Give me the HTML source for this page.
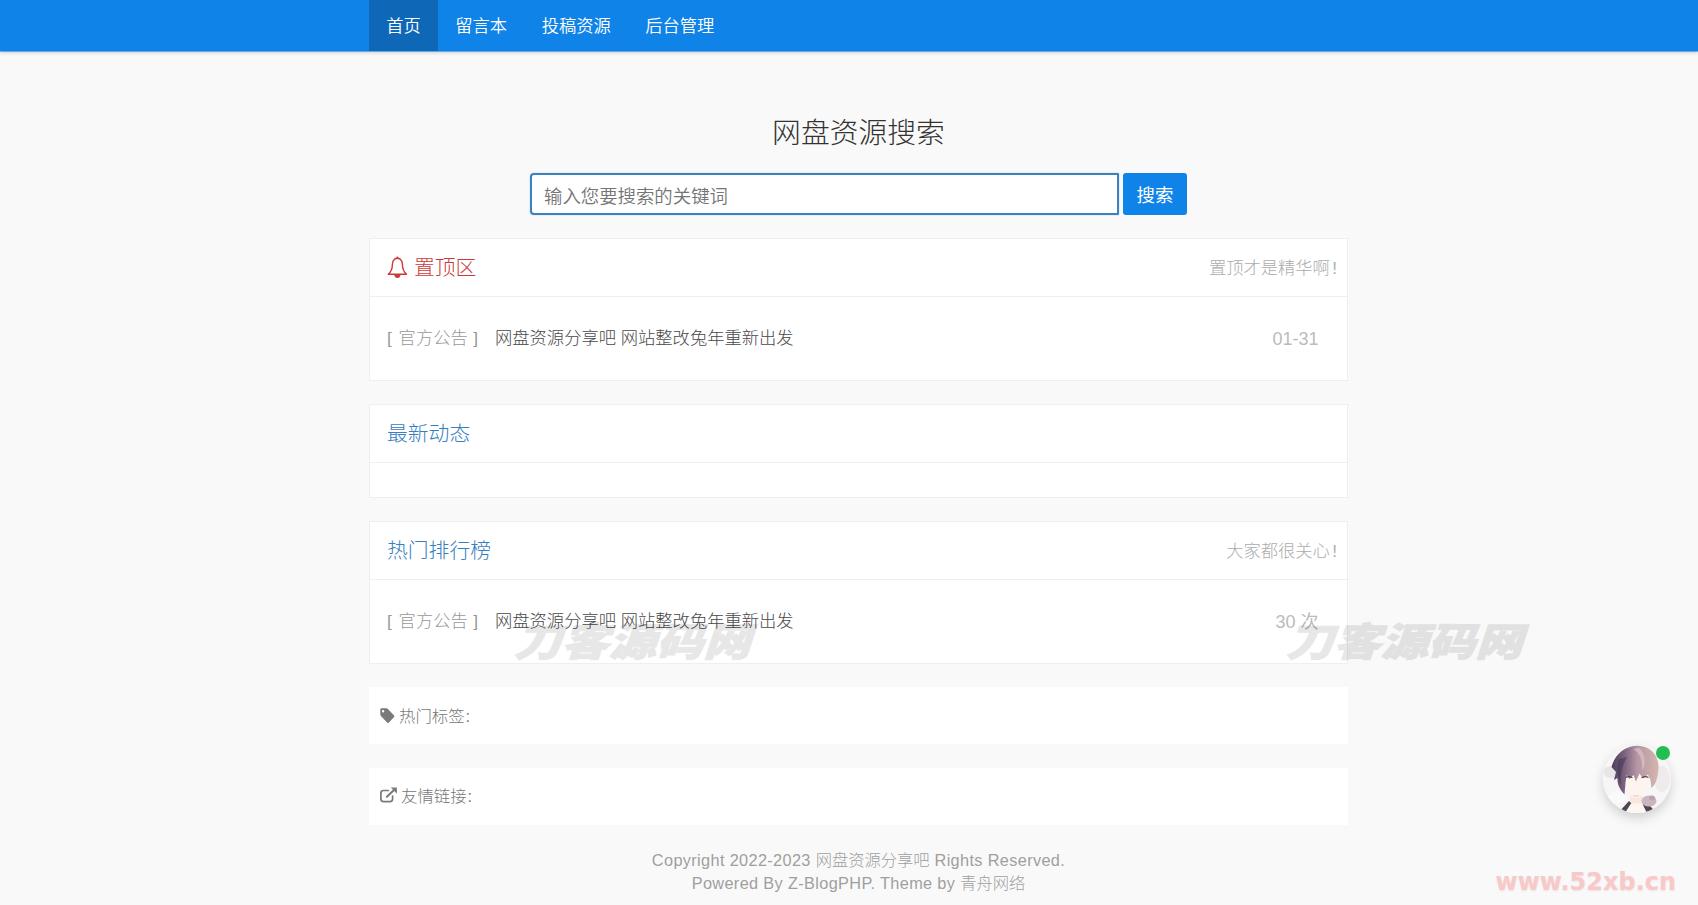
<!DOCTYPE html>
<html lang="zh-CN">
<head>
<meta charset="utf-8">
<title>网盘资源搜索</title>
<style>
*{box-sizing:border-box;margin:0;padding:0}
html,body{width:1698px;height:905px;overflow:hidden}
body{background:#f9f9f9;font-family:"Liberation Sans","Noto Sans CJK SC",sans-serif;font-weight:300;color:#333;position:relative}
a{text-decoration:none;color:inherit}
.nav{position:absolute;left:0;top:0;width:1698px;height:51px;background:#0f83e8;box-shadow:0 1px 0 rgba(17,132,232,.55),0 2px 3px rgba(0,0,0,.16)}
.nav ul{list-style:none;position:absolute;left:369px;top:0;height:51px;display:flex}
.nav li{height:51px;line-height:53px;padding:0 17.280px;font-size:17.280px;color:#fff;font-weight:350;white-space:nowrap}
.nav li.on{background:#0e68b7}
.title{position:absolute;left:369px;width:979px;top:112px;height:42px;line-height:42px;text-align:center;font-size:28.8px;color:#333;font-weight:300}
.sinput{position:absolute;left:530px;top:173px;width:589px;height:42px;border:2px solid #3c80bc;border-radius:4px 1px 1px 4px;background:#fff;font-size:18.4px;line-height:43px;padding-left:12px;color:#757575;font-weight:350;box-shadow:0 0 2px rgba(90,170,235,.45)}
.sbtn{position:absolute;left:1123px;top:173px;width:64px;height:42px;border-radius:3px;background:#0f83e8;color:#fff;font-size:18.4px;line-height:46px;text-align:center;font-weight:400}
.card{position:absolute;left:369px;width:979px;background:#fff;border:1px solid #efefef}
.card .hd{height:58px;border-bottom:1px solid #efefef;position:relative}
.card .hd .t{position:absolute;left:17px;top:0;line-height:58.500px;font-size:20.8px;white-space:nowrap}
.card .hd .r{position:absolute;right:10px;top:0;line-height:58px;font-size:17.3px;color:#adadad;white-space:nowrap}
.red{color:#c93a38}
.bell{position:absolute;left:17px;top:17px}
.blue{color:#3680c0}
.row{position:absolute;left:17px;right:0;top:58px;height:83px;line-height:83px;font-size:17.3px;white-space:nowrap}
.row .cat{color:#999}
.row .cat i{font-style:normal;margin:0 .6px 0 2px}
.row .tt{color:#484848;position:absolute;left:108px;top:0}
.row .dt{position:absolute;right:28.500px;top:1px;color:#bbb;font-size:18px;font-weight:400}
.box{position:absolute;left:369px;width:979px;height:57px;background:#fff;line-height:57px;font-size:16.4px;color:#777;white-space:nowrap}
.box svg{position:absolute}
.box span{position:absolute;top:0}
.box i{font-style:normal;margin-left:1px}
.card .hd .r i{font-style:normal;margin-left:2.300px}
.foot{position:absolute;left:369px;width:979px;top:849px;text-align:center;font-size:16.300px;line-height:22.700px;color:#9f9f9f;letter-spacing:.36px;font-weight:400}
.foot b{font-weight:300;letter-spacing:0}
.wm{position:absolute;font-family:"Noto Sans CJK SC",sans-serif;font-weight:900;font-size:39px;line-height:39px;color:#000;-webkit-text-stroke:1px #000;opacity:.092;transform-origin:0 100%;transform:scaleX(1.212) skewX(-15deg);white-space:nowrap;letter-spacing:0}
.wm2{position:absolute;left:1495.500px;top:866.500px;font-family:"DejaVu Sans",sans-serif;font-weight:700;font-size:24px;line-height:30px;color:#f9c8c8;text-shadow:0 1px 2px rgba(0,0,0,.08);white-space:nowrap}
.ava{position:absolute;left:1603px;top:745px;width:68px;height:68px;border-radius:50%;background:#fff;box-shadow:0 5px 12px rgba(0,0,0,.17);overflow:hidden}
.dot{position:absolute;left:1655.500px;top:745.500px;width:14px;height:14px;border-radius:50%;background:#23be52}
</style>
</head>
<body>
<div class="nav"><ul><li class="on">首页</li><li>留言本</li><li>投稿资源</li><li>后台管理</li></ul></div>
<div class="title">网盘资源搜索</div>
<div class="sinput">输入您要搜索的关键词</div>
<div class="sbtn">搜索</div>

<div class="card" style="top:238px;height:143px">
  <div class="hd"><svg class="bell" width="22" height="23" viewBox="0 0 22 23"><path d="M10.4 2.3C6.6 2.3 5.4 5.6 5.4 8.6c0 4.4-1.7 7.6-4.1 9.6h18.2c-2.4-2-4.1-5.2-4.1-9.6 0-3-1.200-6.300-5-6.300z" fill="none" stroke="#c93a38" stroke-width="1.400" stroke-linejoin="round"/><circle cx="10.400" cy="1.400" r="1" fill="#c93a38"/><path d="M7.300 18.800a3.100 3.100 0 0 0 6.200 0z" fill="#c93a38"/></svg><span class="t red" style="left:44px">置顶区</span><span class="r">置顶才是精华啊<i>!</i></span></div>
  <div class="row"><span class="cat">[ <i>官方公告</i> ]</span><span class="tt">网盘资源分享吧 网站整改兔年重新出发</span><span class="dt">01-31</span></div>
</div>
<div class="card" style="top:404px;height:94px">
  <div class="hd"><span class="t blue">最新动态</span></div>
</div>
<div class="card" style="top:521px;height:143px">
  <div class="hd"><span class="t blue">热门排行榜</span><span class="r">大家都很关心<i>!</i></span></div>
  <div class="row"><span class="cat">[ <i>官方公告</i> ]</span><span class="tt">网盘资源分享吧 网站整改兔年重新出发</span><span class="dt">30 次</span></div>
</div>
<div class="box" style="top:687px"><svg style="left:11px;top:21px" width="16" height="16" viewBox="0 0 16 16"><path fill-rule="evenodd" fill="#7a7a7c" d="M1.400 0.300H6.500Q7.300 0.300 7.900 0.900L14.100 7.500Q14.700 8.200 14.100 8.900L8.700 14.700Q8 15.300 7.300 14.700L0.900 8Q0.300 7.400 0.300 6.600V1.400Q0.300 0.300 1.400 0.300ZM3.100 2.100A1.200 1.200 0 1 0 3.100 4.500A1.200 1.200 0 1 0 3.100 2.100Z"/></svg><span style="left:30px;top:1px">热门标签<i>:</i></span></div>
<div class="box" style="top:768px"><svg style="left:11px;top:19px" width="18" height="17" viewBox="0 0 18 17"><path d="M8.300 3.500H3.500Q0.900 3.500 0.900 6V12.100Q0.900 14.600 3.500 14.600H10Q12.600 14.600 12.600 12.100V9.200" fill="none" stroke="#7a7a7c" stroke-width="1.700" stroke-linecap="round"/><path d="M6.900 9.700L14.500 2.500" stroke="#7a7a7c" stroke-width="2" stroke-linecap="round" fill="none"/><path d="M10.800 0.400H16.900V6.800Z" fill="#7a7a7c"/></svg><span style="left:32px">友情链接<i>:</i></span></div>
<div class="foot">Copyright 2022-2023 <b>网盘资源分享吧</b> Rights Reserved.<br>Powered By Z-BlogPHP. Theme by <b>青舟网络</b></div>
<div class="wm" style="left:513px;top:620px">刀客源码网</div>
<div class="wm" style="left:1285px;top:620px">刀客源码网</div>
<div class="wm2">www.52xb.cn</div>
<div class="ava"><svg width="68" height="68" viewBox="0 0 68 68"><defs><linearGradient id="hg" x1="0" y1="0" x2="1" y2="0"><stop offset="0" stop-color="#4f3e5f"/><stop offset=".28" stop-color="#7d647f"/><stop offset=".55" stop-color="#b597a4"/><stop offset="1" stop-color="#d4b6b0"/></linearGradient></defs><rect width="68" height="68" fill="#f7f5f5"/><ellipse cx="9" cy="27" rx="9" ry="6" fill="#e9e4e6"/><ellipse cx="59" cy="34" rx="8" ry="13" fill="#efebec"/><ellipse cx="14" cy="52" rx="9" ry="6" fill="#fbfafa"/><path d="M27 50h12v13H27z" fill="#fbe6de"/><path d="M15 68l11-12 2.500 2.500-6 9.500zM39.500 58.500l2.500-2.500 9 9-2 3h-6z" fill="#4c4750"/><path d="M22 68l6-9.500h11l5 9.500z" fill="#fdf5f1"/><ellipse cx="46" cy="56" rx="7.500" ry="5.500" fill="#cbb6c0"/><ellipse cx="49" cy="53" rx="3" ry="2.500" fill="#b9a3b0"/><path d="M21 29C20 42 26 51 32.500 53.500 40 51 47.500 42 46.500 29z" fill="#fdf4ef"/><path d="M30 50.500q2.500 1.600 5.500 0" stroke="#e9b8a8" stroke-width=".8" fill="none"/><path d="M8.500 22C12 8 24 0 36 .8 50 2 58 14 55 28 54.500 34 52 40 48.500 43L47.500 35 45 29.500 40 33.500 36.500 28.500 33 36.500 30.500 30 26.500 34 23.500 30 22.500 38 21.500 49.500C17 45 14 39 14.500 33L11 35 13 27z" fill="url(#hg)"/><path d="M30 4C36 7 40 14 39 26 44 18 42 8 36 3z" fill="#e3cdd0" opacity=".55"/><path d="M16 14C13 22 14 32 18 40 17 30 19 20 24 12z" fill="#3f3050" opacity=".5"/><path d="M23 32.300q3-1.600 6 .2M39 32.500q3-1.800 6-.2" stroke="#54434f" stroke-width="1.300" fill="none" stroke-linecap="round"/></svg></div>
<div class="dot"></div>
</body>
</html>
